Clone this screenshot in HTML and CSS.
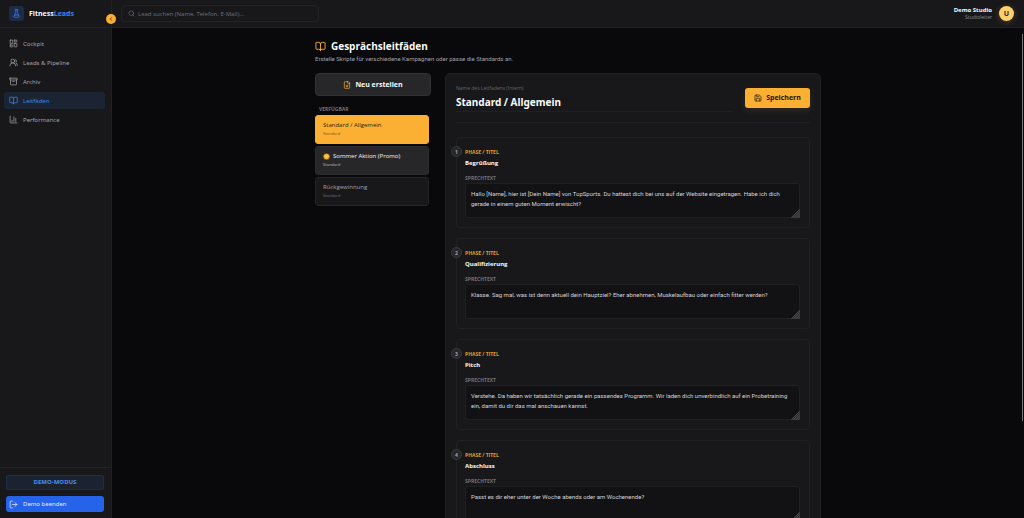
FILE: index.html
```html
<!DOCTYPE html>
<html lang="de">
<head>
<meta charset="utf-8">
<meta name="viewport" content="width=device-width, initial-scale=1">
<title>FitnessLeads – Gesprächsleitfäden</title>
<link rel="stylesheet" href="styles.css">
</head>
<body>
<svg class="defs" aria-hidden="true">
  <symbol id="i-flask" viewBox="0 0 24 24"><path d="M10 2v7.3L5 19.500a1.700 1.700 0 0 0 1.500 2.500h11a1.700 1.700 0 0 0 1.500-2.500L14 9.300V2M8.500 2h7M7 16h10"/></symbol>
  <symbol id="i-grid" viewBox="0 0 24 24"><rect x="3" y="3" width="7" height="9" rx="1"/><rect x="14" y="3" width="7" height="5" rx="1"/><rect x="14" y="12" width="7" height="9" rx="1"/><rect x="3" y="16" width="7" height="5" rx="1"/></symbol>
  <symbol id="i-users" viewBox="0 0 24 24"><path d="M18 21a8 8 0 0 0-16 0"/><circle cx="10" cy="8" r="5"/><path d="M22 20c0-3.370-2-6.500-4-8a5 5 0 0 0-.45-8.300"/></symbol>
  <symbol id="i-archive" viewBox="0 0 24 24"><rect x="2" y="3" width="20" height="5" rx="1"/><path d="M4 8v11a2 2 0 0 0 2 2h12a2 2 0 0 0 2-2V8M10 12h4"/></symbol>
  <symbol id="i-book" viewBox="0 0 24 24"><path d="M12 7v14M3 18a1 1 0 0 1-1-1V4a1 1 0 0 1 1-1h5a4 4 0 0 1 4 4 4 4 0 0 1 4-4h5a1 1 0 0 1 1 1v13a1 1 0 0 1-1 1h-6a3 3 0 0 0-3 3 3 3 0 0 0-3-3z"/></symbol>
  <symbol id="i-chart" viewBox="0 0 24 24"><path d="M3 3v16a2 2 0 0 0 2 2h16M18 17V9M13 17V5M8 17v-3"/></symbol>
  <symbol id="i-search" viewBox="0 0 24 24"><circle cx="11" cy="11" r="8"/><path d="m21 21-4.300-4.300"/></symbol>
  <symbol id="i-left" viewBox="0 0 24 24"><path d="m15 18-6-6 6-6"/></symbol>
  <symbol id="i-exit" viewBox="0 0 24 24"><path d="M9 3H5a2 2 0 0 0-2 2v14a2 2 0 0 0 2 2h4M16 17l5-5-5-5M21 12H9"/></symbol>
  <symbol id="i-file" viewBox="0 0 24 24"><path d="M15 2H6a2 2 0 0 0-2 2v16a2 2 0 0 0 2 2h12a2 2 0 0 0 2-2V7zM14 2v4a2 2 0 0 0 2 2h4M9 15h6M12 12v6"/></symbol>
  <symbol id="i-save" viewBox="0 0 24 24"><path d="M15.200 3a2 2 0 0 1 1.400.6l3.800 3.800a2 2 0 0 1 .6 1.400V19a2 2 0 0 1-2 2H5a2 2 0 0 1-2-2V5a2 2 0 0 1 2-2zM17 21v-7a1 1 0 0 0-1-1H8a1 1 0 0 0-1 1v7M7 3v4a1 1 0 0 0 1 1h7"/></symbol>
  <symbol id="i-grip" viewBox="0 0 24 24"><path fill="currentColor" fill-opacity=".25" stroke="none" d="M24 0v24H0z"/><path d="M1 23 23 1M7 23 23 7M13 23 23 13M19 23l4-4"/></symbol>
</svg>

<div class="app">
  <aside class="sidebar">
    <div class="brand">
      <span class="brand-mark"><svg class="icon"><use href="#i-flask"/></svg></span>
      <span class="brand-name">Fitness<span class="brand-accent">Leads</span></span>
      <button class="collapse" type="button" aria-label="Seitenleiste einklappen"><svg class="icon"><use href="#i-left"/></svg></button>
    </div>
    <nav class="nav">
      <a class="nav-item" href="#cockpit"><svg class="icon"><use href="#i-grid"/></svg>Cockpit</a>
      <a class="nav-item" href="#leads"><svg class="icon"><use href="#i-users"/></svg>Leads &amp; Pipeline</a>
      <a class="nav-item" href="#archiv"><svg class="icon"><use href="#i-archive"/></svg>Archiv</a>
      <a class="nav-item active" href="#leitfaeden" aria-current="page"><svg class="icon"><use href="#i-book"/></svg>Leitfäden</a>
      <a class="nav-item" href="#performance"><svg class="icon"><use href="#i-chart"/></svg>Performance</a>
    </nav>
    <div class="side-foot">
      <div class="mode">DEMO-MODUS</div>
      <button class="exit" type="button"><svg class="icon"><use href="#i-exit"/></svg>Demo beenden</button>
    </div>
  </aside>

  <div class="page">
    <header class="topbar">
      <label class="search"><svg class="icon"><use href="#i-search"/></svg><input type="search" aria-label="Lead suchen" placeholder="Lead suchen (Name, Telefon, E-Mail)..."></label>
      <div class="user">
        <div class="user-text"><div class="user-name">Demo Studio</div><div class="user-role">Studioleiter</div></div>
        <div class="avatar">U</div>
      </div>
    </header>

    <main class="content">
      <div class="scroll-thumb"></div>
      <div class="inner">
        <h1 class="title"><svg class="icon"><use href="#i-book"/></svg>Gesprächsleitfäden</h1>
        <p class="subtitle">Erstelle Skripte für verschiedene Kampagnen oder passe die Standards an.</p>
        <div class="columns">
          <section class="guides">
            <button class="new" type="button"><svg class="icon"><use href="#i-file"/></svg>Neu erstellen</button>
            <h2 class="guides-head">VERFÜGBAR</h2>
            <div class="guide-list">
              <button class="guide selected" type="button"><span class="guide-name">Standard / Allgemein</span><span class="guide-kind">Standard</span></button>
              <button class="guide hovered" type="button"><span class="guide-name"><svg class="sun" viewBox="0 0 24 24"><path fill="#d98a2b" d="m12 0 2.500 3 3.500-1.500 1 4 4 1-1.500 3.500L24 12l-2.500 2.500 1.500 3.500-4 1-1 4-3.500-1.500L12 24l-2.500-2.500L6 23l-1-4-4-1 1.500-3.500L0 12l2.500-2L1 6.500l4-1 1-4L9.500 3z"/><circle cx="12" cy="12" r="8" fill="#ffc63f"/></svg>Sommer Aktion (Promo)</span><span class="guide-kind">Standard</span></button>
              <button class="guide" type="button"><span class="guide-name">Rückgewinnung</span><span class="guide-kind">Standard</span></button>
            </div>
          </section>

          <form class="editor">
            <div class="editor-head">
              <div class="name-field">
                <label class="name-label" for="guide-name">Name des Leitfadens (Intern)</label>
                <input class="name-input" id="guide-name" type="text" value="Standard / Allgemein">
              </div>
              <button class="save" type="button"><svg class="icon"><use href="#i-save"/></svg>Speichern</button>
            </div>
            <div class="steps">
              <div class="step">
                <span class="step-no">1</span>
                <label class="phase-label" for="p1">PHASE / TITEL</label>
                <input class="phase-input" id="p1" type="text" value="Begrüßung">
                <label class="speech-label" for="s1">SPRECHTEXT</label>
                <div class="speech"><textarea id="s1" spellcheck="false">Hallo [Name], hier ist [Dein Name] von TopSports. Du hattest dich bei uns auf der Website eingetragen. Habe ich dich gerade in einem guten Moment erwischt?</textarea><svg class="grip"><use href="#i-grip"/></svg></div>
              </div>
              <div class="step">
                <span class="step-no">2</span>
                <label class="phase-label" for="p2">PHASE / TITEL</label>
                <input class="phase-input" id="p2" type="text" value="Qualifizierung">
                <label class="speech-label" for="s2">SPRECHTEXT</label>
                <div class="speech"><textarea id="s2" spellcheck="false">Klasse. Sag mal, was ist denn aktuell dein Hauptziel? Eher abnehmen, Muskelaufbau oder einfach fitter werden?</textarea><svg class="grip"><use href="#i-grip"/></svg></div>
              </div>
              <div class="step">
                <span class="step-no">3</span>
                <label class="phase-label" for="p3">PHASE / TITEL</label>
                <input class="phase-input" id="p3" type="text" value="Pitch">
                <label class="speech-label" for="s3">SPRECHTEXT</label>
                <div class="speech"><textarea id="s3" spellcheck="false">Verstehe. Da haben wir tatsächlich gerade ein passendes Programm. Wir laden dich unverbindlich auf ein Probetraining ein, damit du dir das mal anschauen kannst.</textarea><svg class="grip"><use href="#i-grip"/></svg></div>
              </div>
              <div class="step">
                <span class="step-no">4</span>
                <label class="phase-label" for="p4">PHASE / TITEL</label>
                <input class="phase-input" id="p4" type="text" value="Abschluss">
                <label class="speech-label" for="s4">SPRECHTEXT</label>
                <div class="speech"><textarea id="s4" spellcheck="false">Passt es dir eher unter der Woche abends oder am Wochenende?</textarea><svg class="grip"><use href="#i-grip"/></svg></div>
              </div>
            </div>
          </form>
        </div>
      </div>
    </main>
  </div>
</div>
</body>
</html>
```
FILE: styles.css
```css
* { box-sizing: border-box; }
body {
  margin: 0;
  background: #09090b;
  color: #fafafa;
  font: 6px/8px "Open Sans", "Noto Sans", sans-serif;
}
button, input, textarea { font: inherit; color: inherit; margin: 0; outline: 0; }
button { cursor: pointer; }
.defs { position: absolute; width: 0; height: 0; }
.icon { width: 9px; height: 9px; flex: none; fill: none; stroke: currentColor; stroke-width: 2; stroke-linecap: round; stroke-linejoin: round; }

.app { display: flex; height: 100vh; overflow: hidden; }

.sidebar { display: flex; flex-direction: column; flex: 0 0 112px; background: #18181b; border-right: 1px solid #222225; font-family: "Noto Sans", sans-serif; }
.brand { position: relative; display: flex; align-items: center; gap: 5px; height: 28px; padding-left: 9px; border-bottom: 1px solid #222225; }
.brand-mark { display: grid; place-items: center; width: 15px; height: 15px; border-radius: 3px; background: #1c2b48; color: #3b82f6; }
.brand-name { font-family: "Open Sans", sans-serif; font-size: 7px; font-weight: 700; }
.brand-accent { color: #3b82f6; }
.collapse { position: absolute; z-index: 1; right: -5px; top: 14px; display: grid; place-items: center; width: 10px; height: 10px; padding: 0; border: 0; border-radius: 50%; background: #fbb034; color: #4a3208; }
.collapse .icon { width: 6px; height: 6px; stroke-width: 3; }
.nav { display: flex; flex-direction: column; gap: 2px; flex: 1; padding: 7px 6px 0 4px; }
.nav-item { display: flex; align-items: center; gap: 5px; height: 17px; padding-left: 5px; border-radius: 3px; color: #a1a1aa; text-decoration: none; }
.nav-item.active { background: #1b2433; color: #3b82f6; }
.side-foot { display: flex; flex-direction: column; gap: 6px; padding: 7px 7px 6px 6px; border-top: 1px solid #222225; }
.mode { padding: 2px; border: 1px solid #1c2e50; border-radius: 2px; background: #1b2331; color: #4b8ff0; font-family: "Open Sans", sans-serif; font-weight: 700; line-height: 9px; text-align: center; }
.exit { display: flex; align-items: center; gap: 5px; height: 16px; padding: 0 3px; border: 0; border-radius: 3px; background: #2563eb; color: #e4edff; }

.page { display: flex; flex-direction: column; flex: 1; min-width: 0; }
.topbar { display: flex; align-items: center; justify-content: space-between; flex: none; height: 28px; padding: 0 10px 0 9px; border-bottom: 1px solid #202023; background: #18181b; }
.search { display: flex; align-items: center; gap: 3px; flex: 0 1 198px; height: 17px; padding: 0 6px; border: 1px solid #222225; border-radius: 4px; color: #71717a; }
.search .icon { width: 7px; height: 7px; }
.search input { flex: 1; min-width: 0; padding: 0; border: 0; background: none; appearance: none; }
.search input::placeholder { color: #71717a; opacity: 1; }
.user { display: flex; align-items: center; gap: 7px; text-align: right; }
.user-name { font-weight: 700; }
.user-role { color: #8b8b93; font-size: 5px; line-height: 7px; }
.avatar { display: grid; place-items: center; width: 15px; height: 15px; border-radius: 50%; background: #ffd06b; color: #27272a; font-size: 7px; font-weight: 700; box-shadow: 0 1px 6px #fbb03440; }

.content { position: relative; flex: 1; min-height: 0; overflow: hidden; }
.scroll-thumb { position: absolute; right: 1px; top: 6px; width: 1px; height: 79%; background: #77777b; }
.inner { max-width: 506px; margin: 0 auto; padding-top: 11px; }
.title { display: flex; align-items: center; gap: 5px; margin: 0; font-size: 10px; font-weight: 700; line-height: 14px; }
.title .icon { width: 11px; height: 11px; color: #fbb034; }
.subtitle { margin: 2px 0 10px; color: #a1a1aa; font-family: Roboto, sans-serif; line-height: 8px; }
.columns { display: grid; grid-template-columns: 116px minmax(0, 1fr); gap: 14px; align-items: start; }
.new { display: flex; align-items: center; justify-content: center; gap: 4px; width: 100%; height: 23px; border: 1px solid #313134; border-radius: 4px; background: #27272a; font-size: 7px; font-weight: 700; }
.new .icon { width: 8px; height: 8px; color: #fbb034; }
.guides-head { margin: 9px 4px 2px; color: #71717a; font-size: 5px; font-weight: 700; line-height: 8px; }
.guide-list { display: flex; flex-direction: column; gap: 2px; padding-right: 2px; }
.guide { display: flex; flex-direction: column; justify-content: center; gap: 1px; height: 29px; padding: 0 7px; border: 1px solid #242427; border-radius: 3px; background: #18181b; color: #a1a1aa; text-align: left; }
.guide-name { display: flex; align-items: center; gap: 3px; }
.guide-kind { font-family: "Noto Sans", sans-serif; font-size: 4px; opacity: .6; }
.guide.selected { border-color: #fbb034; background: #fbb034; color: #2b1e08; }
.guide.hovered { border-color: #2d2d30; background: #27272a; color: #f4f4f5; }
.sun { width: 7px; height: 7px; }

.editor { min-height: 600px; padding: 10px; border: 1px solid #202023; border-radius: 5px; background: #18181b; }
.editor-head { display: flex; align-items: center; gap: 14px; padding-bottom: 10px; border-bottom: 1px solid #202023; }
.name-field { display: flex; flex-direction: column; flex: 1; min-width: 0; }
.name-label { color: #66666e; font-size: 5px; line-height: 8px; }
.name-input { width: 100%; height: 20px; padding: 2px 0; border: 0; border-bottom: 1px solid #202023; background: none; font-family: "Noto Sans", sans-serif; font-size: 10px; font-weight: 700; }
.save { display: flex; align-items: center; justify-content: center; gap: 4px; flex: 0 0 65px; height: 20px; padding: 0; border: 0; border-radius: 3px; background: #fbb034; color: #1b1304; font-size: 7px; font-weight: 700; box-shadow: 0 3px 7px #fbb0341a; }
.save .icon { width: 8px; height: 8px; }
.steps { display: flex; flex-direction: column; gap: 10px; padding-top: 14px; }
.step { position: relative; display: flex; flex-direction: column; padding: 10px 9px 9px 8px; border: 1px solid #202023; border-radius: 4px; }
.step-no { position: absolute; left: -6px; top: 8px; display: grid; place-items: center; width: 11px; height: 11px; border: 1px solid #3a3a3e; border-radius: 50%; background: #27272a; color: #a1a1aa; font-size: 5px; font-weight: 700; }
.phase-label { color: #e39c26; font-size: 5px; font-weight: 700; line-height: 8px; }
.phase-input { width: 100%; height: 14px; padding: 0; border: 0; background: none; font-weight: 700; }
.speech-label { color: #71717a; font-size: 5px; font-weight: 700; line-height: 8px; padding-top: 4px; }
.speech { position: relative; display: flex; margin-top: 1px; }
.speech textarea { width: 100%; height: 35px; padding: 5px; border: 1px solid #202023; border-radius: 3px; background: #121214; color: #d4d4d8; font-family: Roboto, sans-serif; line-height: 10px; resize: none; overflow: hidden; }
.grip { position: absolute; right: 0; bottom: 0; width: 9px; height: 9px; fill: none; color: #77777b; stroke: #5a5a5e; stroke-width: 2; }
```
